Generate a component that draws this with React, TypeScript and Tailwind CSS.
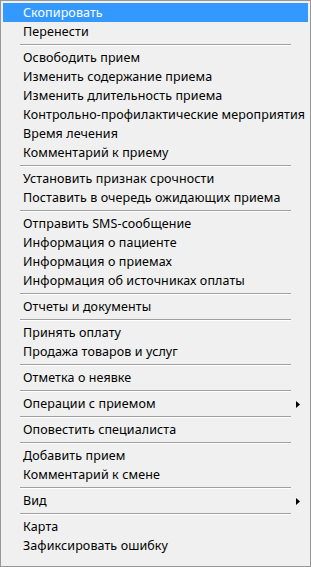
import React from "react";

type Entry = { label?: string; sub?: boolean; active?: boolean; sep?: boolean };

const items: Entry[] = [
  { label: "Скопировать", active: true },
  { label: "Перенести" },
  { sep: true },
  { label: "Освободить прием" },
  { label: "Изменить содержание приема" },
  { label: "Изменить длительность приема" },
  { label: "Контрольно-профилактические мероприятия" },
  { label: "Время лечения" },
  { label: "Комментарий к приему" },
  { sep: true },
  { label: "Установить признак срочности" },
  { label: "Поставить в очередь ожидающих приема" },
  { sep: true },
  { label: "Отправить SMS-сообщение" },
  { label: "Информация о пациенте" },
  { label: "Информация о приемах" },
  { label: "Информация об источниках оплаты" },
  { sep: true },
  { label: "Отчеты и документы" },
  { sep: true },
  { label: "Принять оплату" },
  { label: "Продажа товаров и услуг" },
  { sep: true },
  { label: "Отметка о неявке" },
  { sep: true },
  { label: "Операции с приемом", sub: true },
  { sep: true },
  { label: "Оповестить специалиста" },
  { sep: true },
  { label: "Добавить прием" },
  { label: "Комментарий к смене" },
  { sep: true },
  { label: "Вид", sub: true },
  { sep: true },
  { label: "Карта" },
  { label: "Зафиксировать ошибку" },
];

const App = () => {
  return (
    <div
      className="w-[311px] h-[567px] bg-[#f0f0f0] border border-[#979797] p-[2px] flex flex-col text-[12.5px] tracking-[0.1px] text-black"
      style={{ fontFamily: '"Segoe UI", "Noto Sans", "Open Sans", sans-serif' }}
    >
      {items.map((it, i) =>
        it.sep ? (
          <div key={i} className="h-[7px] flex flex-col justify-center px-[17px]">
            <div className="border-t border-[#a0a0a0]" />
            <div className="border-t border-white" />
          </div>
        ) : (
          <div
            key={i}
            className={`h-[19px] shrink-0 flex items-center pt-[1px] pl-[20px] pr-[8px] leading-none whitespace-nowrap ${
              it.active ? "bg-[#3399ff] text-white" : ""
            }`}
          >
            <span className="flex-1">{it.label}</span>
            {it.sub && (
              <svg width="4" height="7" viewBox="0 0 4 7">
                <path d="M0 0 L4 3.5 L0 7 Z" fill="#000" />
              </svg>
            )}
          </div>
        )
      )}
    </div>
  );
};

export default App;
